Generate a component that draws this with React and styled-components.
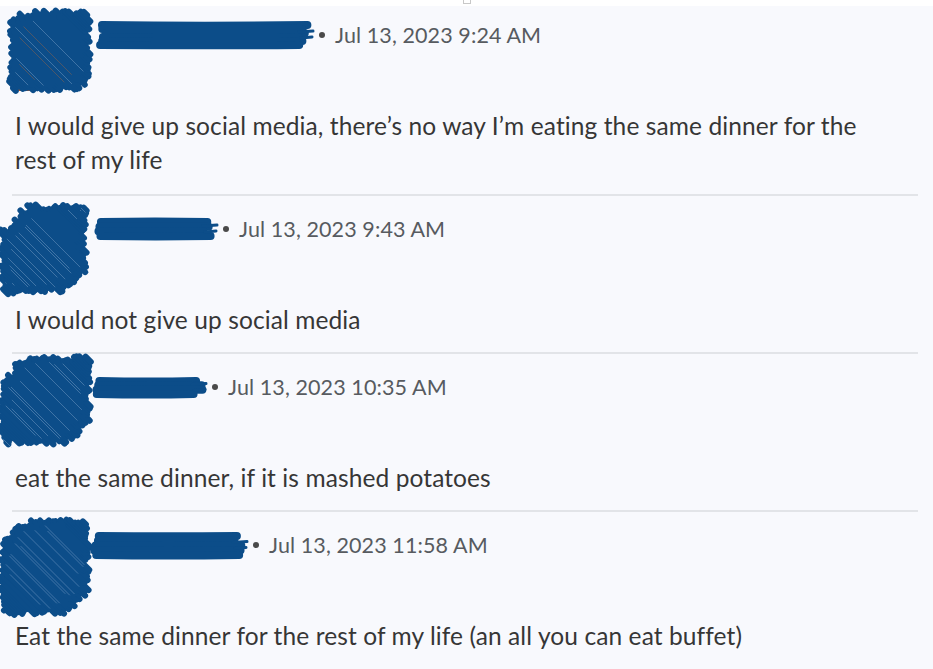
import styled, { createGlobalStyle } from 'styled-components';

const GlobalStyle = createGlobalStyle`
  html, body {
    margin: 0;
    padding: 0;
    background: #f8f9fd;
  }
  body {
    font-family: Lato, "Open Sans", sans-serif;
    width: 933px;
    overflow: hidden;
  }
`;

const INK = '#0c4d89';

const Page = styled.div`
  width: 933px;
  min-height: 669px;
  background: #f8f9fd;
`;

const TopStrip = styled.div`
  height: 6px;
  background: #fff;
  display: flex;
  justify-content: center;
`;

const Tab = styled.div`
  width: 6px;
  height: 3px;
  border: 1px solid #c8c8c8;
  border-top: none;
`;

const Post = styled.div`
  padding: ${(p) => (p.$first ? '3px 0 17px' : '7px 0 15px')};
`;

const Header = styled.div`
  display: flex;
  align-items: flex-start;
  height: 90px;
`;

const AvatarBox = styled.div`
  flex: none;
  width: ${(p) => p.$width}px;
  margin-left: ${(p) => p.$left}px;
  height: 90px;
  svg {
    overflow: visible;
    display: block;
  }
`;

const Meta = styled.div`
  display: flex;
  align-items: center;
  height: 30px;
  margin-top: 11px;
`;

const NameBox = styled.div`
  svg {
    overflow: visible;
    display: block;
  }
`;

const Dot = styled.span`
  width: 6px;
  height: 6px;
  border-radius: 50%;
  background: #4a4a4a;
  margin: 0 10px 0 6px;
`;

const Stamp = styled.span`
  font-size: 21.5px;
  color: #575b60;
  letter-spacing: 0.1px;
`;

const Body = styled.p`
  margin: 10px 0 0 0;
  padding: 0 50px 0 15px;
  font-size: 24.5px;
  letter-spacing: 0.1px;
  line-height: 34px;
  color: #363636;
`;

const Rule = styled.hr`
  margin: 0 15px 0 12px;
  border: none;
  border-top: 2px solid #e2e4e8;
  height: 0;
`;

const rng = (seed) => {
  let s = seed;
  return () => {
    s = (s * 9301 + 49297) % 233280;
    return s / 233280;
  };
};

// diagonal "\" strokes filling an octagon (box w×h with corners cut by |dx|+|dy|<=R)
function avatarStrokes(cx, cy, w, h, R, seed) {
  const r = rng(seed);
  const out = [];
  const hw = w / 2 - 3;
  const hh = h / 2 - 3;
  for (let c = -(hw + hh); c <= hw + hh; c += 3) {
    const tmin = Math.max(-R, -2 * hw - c, -2 * hh + c);
    const tmax = Math.min(R, 2 * hw - c, 2 * hh + c);
    if (tmax - tmin < 4) continue;
    const t0 = tmin + (r() - 0.35) * 14;
    const t1 = tmax + (r() - 0.65) * 14;
    out.push({
      x0: cx + (t0 + c) / 2,
      y0: cy + (t0 - c) / 2,
      x1: cx + (t1 + c) / 2,
      y1: cy + (t1 - c) / 2,
      light: r() < 0.2,
    });
  }
  return out;
}

function ScribbleAvatar({ cx, cy, w, h, R, seed, orange }) {
  const lines = avatarStrokes(cx, cy, w, h, R, seed);
  return (
    <svg width="90" height="90" viewBox="0 0 90 90">
      {orange && <rect x="5" y="52" width="22" height="30" rx="6" fill="#c8581a" />}
      {lines.map((l, i) => (
        <line
          key={i}
          x1={l.x0}
          y1={l.y0}
          x2={l.x1}
          y2={l.y1}
          stroke={INK}
          strokeWidth="6"
          strokeLinecap="round"
        />
      ))}
      {lines
        .filter((l) => l.light)
        .map((l, i) => (
          <line
            key={'t' + i}
            x1={l.x0 + 5}
            y1={l.y0 + 5}
            x2={l.x1 - 5}
            y2={l.y1 - 5}
            stroke={orange && i % 2 ? '#b0673a' : '#8fb0d2'}
            strokeOpacity="0.5"
            strokeWidth="0.8"
          />
        ))}
    </svg>
  );
}

function ScribbleName({ width, height, seed }) {
  const r = rng(seed);
  const n = Math.max(3, Math.round(height / 5));
  const strokes = [];
  for (let i = 0; i < n; i++) {
    const y = 4 + (i * (height - 8)) / (n - 1);
    const x0 = 3 + r() * 6;
    const x1 = width - 3 - r() * 12;
    const mid = y + (r() - 0.5) * 3;
    strokes.push(`M${x0} ${y} Q${width / 2} ${mid} ${x1} ${y}`);
  }
  return (
    <svg width={width} height={height} viewBox={`0 0 ${width} ${height}`}>
      {strokes.map((d, i) => (
        <path key={i} d={d} stroke={INK} strokeWidth="8" strokeLinecap="round" fill="none" />
      ))}
      <path
        d={`M${width - 14} ${height / 2 - 3} L${width} ${height / 2 - 4} M${width - 12} ${height / 2 + 3} L${width - 1} ${height / 2 + 2}`}
        stroke={INK}
        strokeWidth="3"
        strokeLinecap="round"
      />
    </svg>
  );
}

const posts = [
  {
    avatar: { left: 8, width: 89, cx: 42, cy: 42, w: 84, h: 82, R: 64, seed: 11, orange: true },
    name: { width: 216, height: 28, seed: 3 },
    time: 'Jul 13, 2023 9:24 AM',
    text: 'I would give up social media, there’s no way I’m eating the same dinner for the rest of my life',
  },
  {
    avatar: { left: 0, width: 95, cx: 44, cy: 46, w: 88, h: 92, R: 60, seed: 29 },
    name: { width: 122, height: 22, seed: 7 },
    time: 'Jul 13, 2023 9:43 AM',
    text: 'I would not give up social media',
  },
  {
    avatar: { left: 0, width: 92, cx: 46, cy: 39, w: 92, h: 90, R: 62, seed: 41 },
    name: { width: 114, height: 21, seed: 13 },
    time: 'Jul 13, 2023 10:35 AM',
    text: 'eat the same dinner, if it is mashed potatoes',
  },
  {
    avatar: { left: 0, width: 90, cx: 45, cy: 48, w: 90, h: 97, R: 64, seed: 57 },
    name: { width: 157, height: 27, seed: 19 },
    time: 'Jul 13, 2023 11:58 AM',
    text: 'Eat the same dinner for the rest of my life (an all you can eat buffet)',
  },
];

export default function App() {
  return (
    <Page>
      <GlobalStyle />
      <TopStrip>
        <Tab />
      </TopStrip>
      {posts.map((p, i) => (
        <div key={p.time}>
          {i > 0 && <Rule />}
          <Post $first={i === 0}>
            <Header>
              <AvatarBox $left={p.avatar.left} $width={p.avatar.width}>
                <ScribbleAvatar {...p.avatar} />
              </AvatarBox>
              <Meta>
                <NameBox>
                  <ScribbleName {...p.name} />
                </NameBox>
                <Dot />
                <Stamp>{p.time}</Stamp>
              </Meta>
            </Header>
            <Body>{p.text}</Body>
          </Post>
        </div>
      ))}
    </Page>
  );
}
